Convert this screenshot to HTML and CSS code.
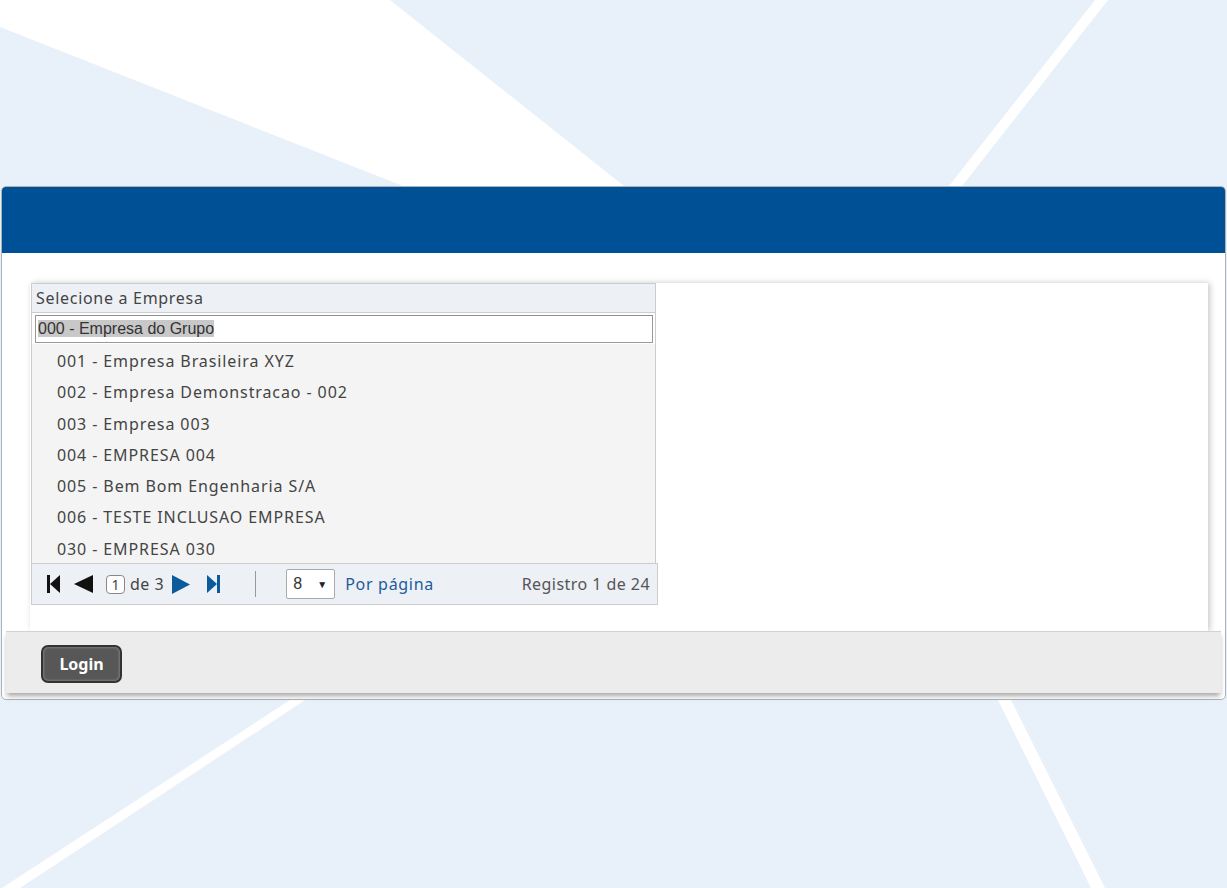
FILE: index.html
```html
<!DOCTYPE html>
<html lang="pt">
<head>
<meta charset="utf-8">
<title>Selecione a Empresa</title>
<link rel="stylesheet" href="styles.css">
</head>
<body>
<svg class="bg" width="1227" height="888" viewBox="0 0 1227 888" aria-hidden="true">
  <polygon points="0,0 390,0 624,186 403,186 0,27" fill="#ffffff"/>
  <polygon points="1095,0 1108,0 962,186 949,186" fill="#ffffff"/>
  <polygon points="290,700 305,700 20,888 2,888" fill="#ffffff"/>
  <polygon points="998,700 1011,700 1105,888 1091,888" fill="#ffffff"/>
</svg>
<div class="card">
  <div class="card-head"></div>
  <div class="card-body">
    <div class="panel">
      <div class="picker">
        <div class="picker-title">Selecione a Empresa</div>
        <div class="picker-input-wrap">
          <div class="picker-input"><span class="sel">000 - Empresa do Grupo</span></div>
        </div>
        <ul class="picker-list">
          <li>001 - Empresa Brasileira XYZ</li>
          <li>002 - Empresa Demonstracao - 002</li>
          <li>003 - Empresa 003</li>
          <li>004 - EMPRESA 004</li>
          <li>005 - Bem Bom Engenharia S/A</li>
          <li>006 - TESTE INCLUSAO EMPRESA</li>
          <li>030 - EMPRESA 030</li>
        </ul>
        <div class="pager">
          <svg class="ic ic-first" width="13" height="18" viewBox="0 0 13 18"><rect x="0" y="0" width="3" height="18" fill="#111"/><polygon points="3,9 13,0 13,18" fill="#111"/></svg>
          <svg class="ic ic-prev" width="19" height="18" viewBox="0 0 19 18"><polygon points="0,9 19,0 19,18" fill="#111"/></svg>
          <span class="page-box">1</span>
          <span class="page-of">de 3</span>
          <svg class="ic ic-next" width="18" height="19" viewBox="0 0 18 19"><polygon points="0,0 18,9.5 0,19" fill="#0a5a9c"/></svg>
          <svg class="ic ic-last" width="13" height="18" viewBox="0 0 13 18"><polygon points="0,0 10,9 0,18" fill="#0a5a9c"/><rect x="10" y="0" width="3" height="18" fill="#0a5a9c"/></svg>
          <span class="sep"></span>
          <span class="per-select"><span>8</span><span class="caret">▼</span></span>
          <span class="per-label">Por página</span>
          <span class="registro">Registro 1 de 24</span>
        </div>
      </div>
    </div>
    <div class="footer">
      <button class="login" type="button">Login</button>
    </div>
  </div>
</div>
</body>
</html>
```

FILE: styles.css
```css
html, body {
  margin: 0;
  padding: 0;
}
body {
  position: relative;
  width: 1227px;
  height: 888px;
  overflow: hidden;
  background: #e8f1f9;
  font-family: "Noto Sans", "DejaVu Sans", sans-serif;
  color: #444;
}
.bg {
  position: absolute;
  left: 0;
  top: 0;
  z-index: 0;
}
.card {
  position: relative;
  z-index: 1;
  margin: 186px 1px 0 1px;
  height: 512px;
  border: 1px solid #aeb2b6;
  border-radius: 5px;
  background: #ffffff;
  display: flex;
  flex-direction: column;
}
.card-head {
  height: 66px;
  background: #005096;
  border-radius: 4px 4px 0 0;
}
.card-body {
  flex: 1;
  display: flex;
  flex-direction: column;
  padding-top: 30px;
}
.panel {
  margin: 0 17px 0 28px;
  height: 348px;
  background: #fff;
  box-shadow: 2px 0 6px rgba(0, 0, 0, 0.22);
}
.picker {
  width: 626px;
  margin-left: 1px;
}
.picker-title {
  box-sizing: border-box;
  width: 625px;
  height: 30px;
  border: 1px solid #cccccc;
  background: #edf0f5;
  font-size: 16px;
  line-height: 28px;
  padding-left: 4px;
  color: #444;
  letter-spacing: 0.7px;
}
.picker-input-wrap {
  box-sizing: border-box;
  width: 625px;
  padding: 2px 2px 1px 3px;
  border-left: 1px solid #ccc;
  border-right: 1px solid #ccc;
  background: #fff;
}
.picker-input {
  box-sizing: border-box;
  height: 28px;
  border: 1px solid #999;
  border-top-color: #8f8f8f;
  font-family: "Liberation Sans", Arial, sans-serif;
  font-size: 16px;
  line-height: 26px;
  padding-left: 2px;
  color: #333;
}
.sel {
  background: #c8c8c8;
}
.picker-list {
  box-sizing: border-box;
  width: 625px;
  margin: 0;
  padding: 2px 0 0 0;
  list-style: none;
  background: #f4f4f4;
  border-left: 1px solid #ccc;
  border-right: 1px solid #ccc;
  height: 219px;
}
.picker-list li {
  height: 31.3px;
  line-height: 30px;
  padding-left: 25px;
  font-size: 16px;
  letter-spacing: 0.9px;
  color: #444;
}
.pager {
  box-sizing: border-box;
  width: 627px;
  height: 42px;
  border: 1px solid #cccccc;
  background: #edf0f5;
  display: flex;
  align-items: center;
  padding: 0 7px 0 15px;
  font-size: 16px;
}
.ic {
  display: block;
  flex: none;
}
.ic-first { margin-right: 14px; }
.ic-prev { margin-right: 13px; }
.page-box {
  box-sizing: border-box;
  width: 19px;
  height: 19px;
  border: 1px solid #888;
  border-radius: 4px;
  background: #fff;
  font-size: 14px;
  line-height: 17px;
  text-align: center;
  color: #444;
}
.page-of {
  margin-left: 5px;
  margin-right: 8px;
  letter-spacing: 0.5px;
}
.ic-next { margin-right: 17px; }
.sep {
  width: 1px;
  height: 26px;
  background: #999;
  margin-left: 35px;
  margin-right: 30px;
}
.per-select {
  box-sizing: border-box;
  width: 49px;
  height: 30px;
  border: 1px solid #aaa;
  border-radius: 2px;
  background: #fff;
  display: flex;
  align-items: center;
  justify-content: space-between;
  padding: 0 7px 0 6px;
  font-family: "Liberation Sans", Arial, sans-serif;
  font-size: 16px;
  color: #333;
}
.caret {
  font-size: 10px;
  color: #222;
}
.per-label {
  margin-left: 10px;
  color: #1a5c9e;
  letter-spacing: 0.7px;
}
.registro {
  margin-left: auto;
  color: #555;
  letter-spacing: 0.45px;
}
.footer {
  margin: 0 4px;
  height: 61px;
  border-top: 1px solid #d2d2d2;
  background: #ececec;
  box-shadow: 0 4px 5px -1px rgba(0, 0, 0, 0.35);
  display: flex;
  align-items: center;
  padding-left: 35px;
}
.login {
  box-sizing: border-box;
  width: 81px;
  height: 38px;
  border: 2px solid #333;
  border-radius: 7px;
  background: #575757;
  box-shadow: inset 0 0 3px rgba(255, 255, 255, 0.45);
  color: #fff;
  font-family: "Noto Sans", "DejaVu Sans", sans-serif;
  font-weight: 700;
  font-size: 16px;
  padding: 0;
  margin-top: 2px;
}
```
